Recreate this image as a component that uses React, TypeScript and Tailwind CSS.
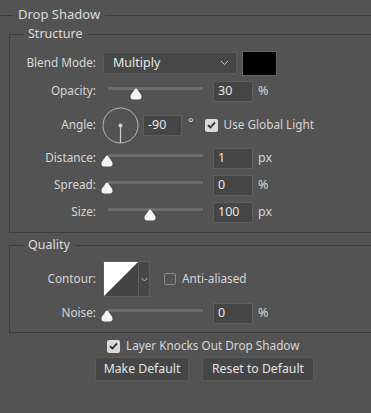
import React from "react";

const FONT = { fontFamily: '"Noto Sans", "Open Sans", sans-serif' };

const Thumb = ({ left }: { left: number }) => (
  <svg
    width="12"
    height="12"
    viewBox="0 0 12 12"
    className="absolute top-[8px]"
    style={{ left }}
  >
    <path
      d="M6 0.6 C6.5 0.6 7 1 7.5 1.7 L10.9 6.4 C11.4 7.1 11.5 7.9 11.5 9 C11.5 10.6 10.5 11.5 9 11.5 L3 11.5 C1.5 11.5 0.5 10.6 0.5 9 C0.5 7.9 0.6 7.1 1.1 6.4 L4.5 1.7 C5 1 5.5 0.6 6 0.6 Z"
      fill="#f4f4f4"
    />
  </svg>
);

const NumberBox = ({ value, width = "w-[40px]" }: { value: string; width?: string }) => (
  <div
    className={`${width} flex h-[21px] items-center border border-[#5e5e5e] bg-[#454545] pl-[4px] text-[12.5px] text-[#e6e6e6]`}
  >
    {value}
  </div>
);

const Label = ({ children }: { children: React.ReactNode }) => (
  <div className="w-[87px] shrink-0 pr-[1px] text-right">{children}</div>
);

const SliderRow = ({
  label,
  value,
  unit,
  thumb,
}: {
  label: string;
  value: string;
  unit: string;
  thumb: number;
}) => (
  <div className="flex h-[22px] items-center">
    <Label>{label}</Label>
    <div className="relative ml-[6px] h-[22px] w-[110px]">
      <div className="absolute top-[7px] left-[5px] right-[10px] h-[3px] bg-[#6c6c6c]" />
      <Thumb left={thumb} />
    </div>
    <NumberBox value={value} />
    <span className="ml-[5px] text-[12.5px]">{unit}</span>
  </div>
);

const Check = ({ checked }: { checked: boolean }) =>
  checked ? (
    <div className="flex h-[13px] w-[13px] items-center justify-center rounded-[2px] bg-[#d9d9d9]">
      <svg width="9" height="8" viewBox="0 0 9 8">
        <path d="M1 4.2 L3.4 6.5 L8 1.4" fill="none" stroke="#2e2e2e" strokeWidth="1.8" />
      </svg>
    </div>
  ) : (
    <div className="h-[12px] w-[12px] rounded-[2px] border border-[#8c8c8c]" />
  );

const Legend = ({ children }: { children: React.ReactNode }) => (
  <legend className="ml-[13px] px-[5px] text-[12.5px] leading-[16px] text-[#dcdcdc]">
    {children}
  </legend>
);

export default function App() {
  return (
    <div
      className="h-[413px] w-[371px] overflow-hidden bg-[#535353] text-[11.75px] text-[#d6d6d6]"
      style={FONT}
    >
      <div className="flex h-[30px] items-center">
        <div className="h-px w-[13px] bg-[#3c3c3c]" />
        <span className="px-[5px] text-[13px] text-[#dcdcdc]">Drop Shadow</span>
        <div className="h-px flex-1 bg-[#3c3c3c]" />
      </div>

      <fieldset className="-mt-[4px] ml-[9px] w-[380px] border border-[#3c3c3c] pb-[9px]">
        <Legend>Structure</Legend>

        <div className="mt-[10px] flex h-[22px] items-center">
          <Label>Blend Mode:</Label>
          <div className="ml-[6px] flex h-[22px] w-[134px] items-center justify-between rounded-[2px] border border-[#5c5c5c] bg-[#474747] pr-[7px] pl-[9px] text-[12.5px] text-[#e6e6e6]">
            <span>Multiply</span>
            <svg width="9" height="6" viewBox="0 0 9 6">
              <path d="M1 1 L4.5 4.5 L8 1" fill="none" stroke="#bdbdbd" strokeWidth="1" />
            </svg>
          </div>
          <div className="ml-[5px] h-[25px] w-[35px] border border-[#666666] bg-black" />
        </div>

        <div className="mt-[6px]">
          <SliderRow label="Opacity:" value="30" unit="%" thumb={27} />
        </div>

        <div className="mt-[5px] flex h-[36px] items-center">
          <Label>Angle:</Label>
          <svg width="37" height="37" viewBox="0 0 37 37" className="ml-[5px]">
            <circle cx="18.5" cy="18.5" r="17.5" fill="none" stroke="#b5b5b5" strokeWidth="1" />
            <line x1="18.5" y1="18.5" x2="18.5" y2="36" stroke="#cfcfcf" strokeWidth="1.2" />
            <circle cx="18.5" cy="18.5" r="2" fill="#cfcfcf" />
          </svg>
          <div className="ml-[4px]">
            <NumberBox value="-90" width="w-[39px]" />
          </div>
          <span className="ml-[6px] -mt-[4px] text-[13px]">°</span>
          <div className="ml-[11px]">
            <Check checked />
          </div>
          <span className="ml-[6px]">Use Global Light</span>
        </div>

        <div className="mt-[4px]">
          <SliderRow label="Distance:" value="1" unit="px" thumb={-2} />
        </div>
        <div className="mt-[5px]">
          <SliderRow label="Spread:" value="0" unit="%" thumb={-2} />
        </div>
        <div className="mt-[5px]">
          <SliderRow label="Size:" value="100" unit="px" thumb={41} />
        </div>
      </fieldset>

      <fieldset className="mt-[4px] ml-[9px] w-[380px] border border-[#3c3c3c] pb-[8px]">
        <Legend>Quality</Legend>

        <div className="mt-[8px] flex h-[36px] items-center">
          <Label>Contour:</Label>
          <div className="ml-[6px] flex h-[36px] border border-[#5e5e5e]">
            <svg width="34" height="34" viewBox="0 0 34 34" className="block">
              <rect width="34" height="34" fill="#444444" />
              <path d="M0 0 L34 0 L0 34 Z" fill="#ffffff" />
            </svg>
            <div className="flex w-[11px] items-center justify-center border-l border-[#5e5e5e] bg-[#474747]">
              <svg width="7" height="5" viewBox="0 0 7 5">
                <path d="M0.5 1 L3.5 4 L6.5 1" fill="none" stroke="#bdbdbd" strokeWidth="1" />
              </svg>
            </div>
          </div>
          <div className="ml-[14px]">
            <Check checked={false} />
          </div>
          <span className="ml-[6px]">Anti-aliased</span>
        </div>

        <div className="mt-[5px]">
          <SliderRow label="Noise:" value="0" unit="%" thumb={-2} />
        </div>
      </fieldset>

      <div className="mt-[5px] flex h-[16px] items-center pl-[107px]">
        <Check checked />
        <span className="ml-[6px]">Layer Knocks Out Drop Shadow</span>
      </div>

      <div className="mt-[3px] flex gap-[13px] pl-[95px]">
        <button className="h-[24px] w-[94px] rounded-[2px] border border-[#5a5a5a] bg-[#464646] text-[12.25px] text-[#e2e2e2]">
          Make Default
        </button>
        <button className="h-[24px] w-[112px] rounded-[2px] border border-[#5a5a5a] bg-[#464646] text-[12.25px] text-[#e2e2e2]">
          Reset to Default
        </button>
      </div>
    </div>
  );
}
